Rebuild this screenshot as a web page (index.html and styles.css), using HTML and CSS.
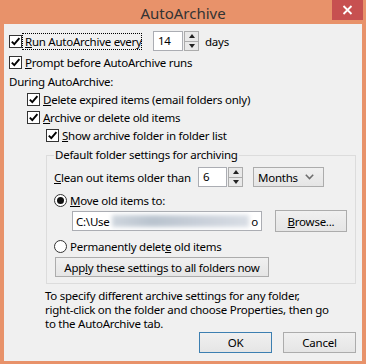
FILE: index.html
```html
<!DOCTYPE html>
<html lang="en">
<head>
    <meta charset="UTF-8">
    <title>AutoArchive</title>
    <link rel="stylesheet" href="styles.css">
</head>
<body>
    <div class="window">
        <div class="titlebar">
            <span class="title">AutoArchive</span>
            <span class="close">
                <svg width="11" height="10" viewBox="0 0 11 10"><path d="M1.5 1 L9.5 9 M9.5 1 L1.5 9" stroke="#fff" stroke-width="1.8"/></svg>
            </span>
        </div>

        <div class="client">
            <!-- Top options -->
            <div class="row row-first">
                <span class="check"><svg width="11" height="11" viewBox="0 0 11 11"><path d="M1.8 5.6 L4.3 8.2 L9.4 2.2" fill="none" stroke="#000" stroke-width="1.9"/></svg></span>
                <span class="label focus"><u>R</u>un AutoArchive every</span>
                <span class="spin spin-days">
                    <span class="spin-field">14</span>
                    <span class="spin-btns"><span class="spin-up"></span><span class="spin-down"></span></span>
                </span>
                <span class="unit">days</span>
            </div>
            <div class="row row-second">
                <span class="check"><svg width="11" height="11" viewBox="0 0 11 11"><path d="M1.8 5.6 L4.3 8.2 L9.4 2.2" fill="none" stroke="#000" stroke-width="1.9"/></svg></span>
                <span class="label"><u>P</u>rompt before AutoArchive runs</span>
            </div>
            <div class="row row-text">During AutoArchive:</div>
            <div class="row indent-1">
                <span class="check"><svg width="11" height="11" viewBox="0 0 11 11"><path d="M1.8 5.6 L4.3 8.2 L9.4 2.2" fill="none" stroke="#000" stroke-width="1.9"/></svg></span>
                <span class="label"><u>D</u>elete expired items (email folders only)</span>
            </div>
            <div class="row indent-1">
                <span class="check"><svg width="11" height="11" viewBox="0 0 11 11"><path d="M1.8 5.6 L4.3 8.2 L9.4 2.2" fill="none" stroke="#000" stroke-width="1.9"/></svg></span>
                <span class="label"><u>A</u>rchive or delete old items</span>
            </div>
            <div class="row indent-2 row-show">
                <span class="check"><svg width="11" height="11" viewBox="0 0 11 11"><path d="M1.8 5.6 L4.3 8.2 L9.4 2.2" fill="none" stroke="#000" stroke-width="1.9"/></svg></span>
                <span class="label"><u>S</u>how archive folder in folder list</span>
            </div>

            <!-- Default folder settings group -->
            <fieldset class="group">
                <legend>Default folder settings for archiving</legend>
                <div class="row row-clean">
                    <span class="clean-label"><u>C</u>lean out items older than</span>
                    <span class="spin spin-months">
                        <span class="spin-field">6</span>
                        <span class="spin-btns"><span class="spin-up"></span><span class="spin-down"></span></span>
                    </span>
                    <span class="combo">
                        <span>Months</span>
                        <svg width="9" height="6" viewBox="0 0 9 6"><path d="M0.8 0.8 L4.5 4.6 L8.2 0.8" fill="none" stroke="#6d6d6d" stroke-width="1.5"/></svg>
                    </span>
                </div>
                <div class="row row-move">
                    <span class="radio on"><span class="dot"></span></span>
                    <span class="label"><u>M</u>ove old items to:</span>
                </div>
                <div class="row row-path">
                    <span class="path-box">
                        <span>C:\Use</span>
                        <span class="blurred"></span>
                        <span>o</span>
                    </span>
                    <span class="btn btn-browse"><span><u>B</u>rowse...</span></span>
                </div>
                <div class="row row-delete">
                    <span class="radio"></span>
                    <span class="label">Permanently delet<u>e</u> old items</span>
                </div>
                <div class="btn btn-apply"><span>App<u>l</u>y these settings to all folders now</span></div>
            </fieldset>

            <p class="note">To specify different archive settings for any folder,<br>right-click on the folder and choose Properties, then go<br>to the AutoArchive tab.</p>

            <div class="actions">
                <span class="btn btn-default">OK</span>
                <span class="btn">Cancel</span>
            </div>
        </div>
    </div>
</body>
</html>
```

FILE: styles.css
```css
body {
    margin: 0;
    font-family: "Noto Sans", "Open Sans", sans-serif;
    font-size: 11.5px;
    letter-spacing: -0.25px;
    color: #000;
    background: #e8926a;
}
.window {
    width: 366px;
    height: 364px;
    background: #e8926a;
    display: flex;
    flex-direction: column;
    box-sizing: border-box;
}
.titlebar {
    height: 26px;
    position: relative;
    display: flex;
    align-items: center;
    justify-content: center;
}
.title {
    font-size: 15px;
    letter-spacing: 0;
    color: #333;
    margin-top: 1px;
}
.close {
    position: absolute;
    top: 0;
    right: 3px;
    width: 31px;
    height: 20px;
    background: #c75050;
    display: flex;
    align-items: center;
    justify-content: center;
}
.client {
    flex: 1;
    margin: 0 4px 3px 4px;
    background: #f0f0f0;
    padding: 0 6px 8px 5px;
    display: flex;
    flex-direction: column;
}
.row {
    display: flex;
    align-items: center;
    height: 18px;
    white-space: nowrap;
}
.row-first {
    margin-top: 7px;
    height: 20px;
}
.row-second {
    margin-top: 1px;
    height: 20px;
}
.row-text {
    height: 18px;
}
.indent-1 {
    padding-left: 18px;
}
.indent-2 {
    padding-left: 37px;
}
.row-show {
    height: 19px;
}
.check {
    width: 11px;
    height: 11px;
    border: 1px solid #333;
    background: #fff;
    display: inline-flex;
    flex: none;
}
.label {
    margin-left: 3px;
}
.focus {
    margin-left: 1px;
    padding: 0 1px 0 2px;
    width: 115px;
    outline: 1px dotted #000;
    outline-offset: 0;
    line-height: 15px;
}
.spin {
    display: inline-flex;
    height: 20px;
}
.spin-days {
    margin-left: 12px;
}
.spin-field {
    width: 30px;
    height: 20px;
    box-sizing: border-box;
    border: 1px solid #abadb3;
    background: #fff;
    padding: 0 4px;
    line-height: 18px;
}
.spin-btns {
    width: 15px;
    height: 20px;
    box-sizing: border-box;
    border: 1px solid #acacac;
    background: #e9e9e9;
    display: flex;
    flex-direction: column;
    margin-left: 1px;
}
.spin-up, .spin-down {
    flex: 1;
    display: flex;
    align-items: center;
    justify-content: center;
}
.spin-up {
    border-bottom: 1px solid #acacac;
}
.spin-up::after {
    content: "";
    border: 3px solid transparent;
    border-bottom: 4px solid #222;
    border-top: 0;
}
.spin-down::after {
    content: "";
    border: 3px solid transparent;
    border-top: 4px solid #222;
    border-bottom: 0;
}
.unit {
    margin-left: 6px;
}
.group {
    margin: 2px 0 0 37px;
    padding: 0 6px 6px 7px;
    border: 1px solid #dcdcdc;
}
.group legend {
    padding: 0 1px;
    line-height: 16px;
}
.row-clean {
    height: 20px;
    margin-top: 4px;
}
.clean-label {
    width: 144px;
}
.spin-months .spin-field {
    width: 29px;
}
.combo {
    margin-left: 10px;
    width: 71px;
    height: 20px;
    box-sizing: border-box;
    border: 1px solid #acacac;
    background: linear-gradient(#f0f0f0, #e5e5e5);
    display: flex;
    align-items: center;
    justify-content: space-between;
    padding: 0 9px 0 4px;
}
.radio {
    width: 11px;
    height: 11px;
    border: 1px solid #333;
    border-radius: 50%;
    background: #fff;
    display: inline-flex;
    align-items: center;
    justify-content: center;
    flex: none;
}
.radio .dot {
    width: 7px;
    height: 7px;
    border-radius: 50%;
    background: #111;
}
.row-move {
    margin-top: 4px;
}
.row-path {
    height: 22px;
    margin-top: 1px;
}
.path-box {
    margin-left: 18px;
    width: 190px;
    height: 20px;
    box-sizing: border-box;
    border: 1px solid #abadb3;
    background: #fff;
    display: flex;
    align-items: center;
    padding: 0 3px;
}
.blurred {
    flex: 1;
    height: 12px;
    margin: 0 2px;
    background: linear-gradient(90deg, #cfd6de, #b9c3ce 30%, #c7ced8 60%, #d9dee5);
    filter: blur(2px);
}
.btn {
    height: 21px;
    box-sizing: border-box;
    border: 1px solid #acacac;
    background: linear-gradient(#f0f0f0, #e5e5e5);
    display: inline-flex;
    align-items: center;
    justify-content: center;
    width: 73px;
    white-space: nowrap;
}
.btn-browse {
    margin-left: 13px;
    width: 72px;
    height: 22px;
}
.row-delete {
    margin-top: 5px;
}
.btn-apply {
    margin: 2px 0 0 1px;
    width: 214px;
    height: 20px;
    display: flex;
}
.note {
    margin: 5px 0 0 36px;
    line-height: 14px;
}
.actions {
    margin-top: 1px;
    display: flex;
    justify-content: flex-end;
    gap: 11px;
}
.btn-default {
    border-color: #3c7fb1;
}
```
